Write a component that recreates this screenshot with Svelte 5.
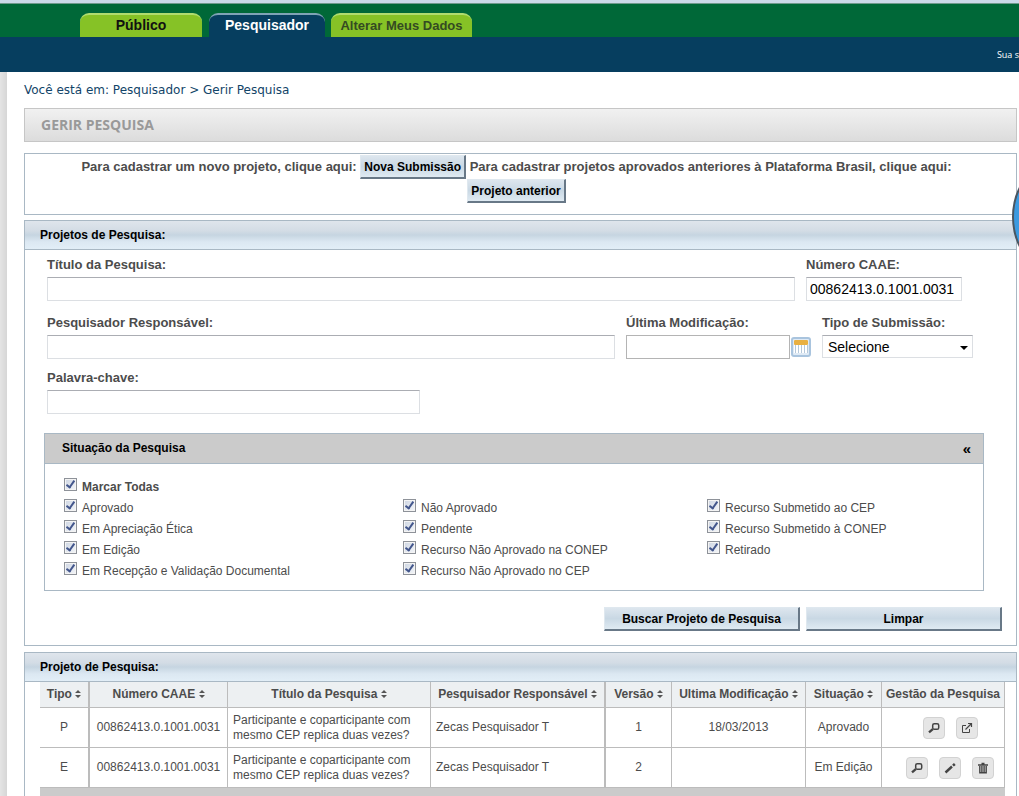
<script>
  const tabs = [
    { label: 'Público', kind: 'public' },
    { label: 'Pesquisador', kind: 'active' },
    { label: 'Alterar Meus Dados', kind: 'account' }
  ];

  let statuses = $state([
    { label: 'Aprovado', checked: true },
    { label: 'Não Aprovado', checked: true },
    { label: 'Recurso Submetido ao CEP', checked: true },
    { label: 'Em Apreciação Ética', checked: true },
    { label: 'Pendente', checked: true },
    { label: 'Recurso Submetido à CONEP', checked: true },
    { label: 'Em Edição', checked: true },
    { label: 'Recurso Não Aprovado na CONEP', checked: true },
    { label: 'Retirado', checked: true },
    { label: 'Em Recepção e Validação Documental', checked: true },
    { label: 'Recurso Não Aprovado no CEP', checked: true }
  ]);

  let all_checked = $derived(statuses.every((s) => s.checked));

  const toggle_all = (e) => {
    const checked = e.target.checked;
    statuses.forEach((s) => (s.checked = checked));
  };

  let open = $state(true);
  let title = $state('');
  let caae = $state('00862413.0.1001.0031');
  let researcher = $state('');
  let modified = $state('');
  let keyword = $state('');

  const clear = () => {
    title = caae = researcher = modified = keyword = '';
  };

  const columns = [
    { label: 'Tipo', width: 50, sort: true },
    { label: 'Número CAAE', width: 138, sort: true },
    { label: 'Título da Pesquisa', width: 203, sort: true },
    { label: 'Pesquisador Responsável', width: 175, sort: true },
    { label: 'Versão', width: 66, sort: true },
    { label: 'Ultima Modificação', width: 134, sort: true },
    { label: 'Situação', width: 76, sort: true },
    { label: 'Gestão da Pesquisa', width: 123, sort: false }
  ];
  const total = columns.reduce((sum, c) => sum + c.width, 0);

  const projects = [
    {
      type: 'P',
      caae: '00862413.0.1001.0031',
      title: 'Participante e coparticipante com mesmo CEP replica duas vezes?',
      researcher: 'Zecas Pesquisador T',
      version: 1,
      modified: '18/03/2013',
      status: 'Aprovado',
      actions: ['view', 'open']
    },
    {
      type: 'E',
      caae: '00862413.0.1001.0031',
      title: 'Participante e coparticipante com mesmo CEP replica duas vezes?',
      researcher: 'Zecas Pesquisador T',
      version: 2,
      modified: '',
      status: 'Em Edição',
      actions: ['view', 'edit', 'remove']
    }
  ];

  const action_names = {
    view: 'Detalhar',
    open: 'Abrir',
    edit: 'Editar',
    remove: 'Excluir'
  };
</script>

{#snippet icon(name)}
  <svg width="12" height="12" viewBox="0 0 12 12" fill="none" stroke="#444">
    {#if name === 'view'}
      <rect x="4.7" y="1.7" width="6" height="5.6" rx="1.6" stroke-width="1.5" />
      <path d="M4.8 7.2 1 10.4" stroke-width="2.4" />
    {:else if name === 'open'}
      <path d="M5 3.500H1.500v7h7V7" />
      <path d="M4.500 7.500 10 2M7 1.500h3.500V5" stroke-width="1.2" />
    {:else if name === 'edit'}
      <path d="M1.500 10.500 8 4.500" stroke-width="2.4" />
      <path d="M9 3.600 10.800 2" stroke-width="2.6" />
    {:else}
      <path d="M1 3h10M4.500 1.500h3" stroke-width="1.6" />
      <path d="M2.800 4v6.800h6.400V4M4.900 4v7M7.100 4v7" stroke-width="1.4" />
    {/if}
  </svg>
{/snippet}

<div class="page">
  <header>
    <nav>
      {#each tabs as tab}
        <a href="#{tab.kind}" class="tab {tab.kind}">{tab.label}</a>
      {/each}
    </nav>
    <div class="session">Sua s</div>
  </header>

  <main>
    <p class="breadcrumb">Você está em: Pesquisador &gt; Gerir Pesquisa</p>
    <h1>GERIR PESQUISA</h1>

    <div class="intro">
      Para cadastrar um novo projeto, clique aqui:
      <button class="button">Nova Submissão</button>
      Para cadastrar projetos aprovados anteriores à Plataforma Brasil, clique aqui:
      <button class="button">Projeto anterior</button>
    </div>

    <section class="panel">
      <h2>Projetos de Pesquisa:</h2>
      <form onsubmit={(e) => e.preventDefault()}>
        <div class="fields">
          <div class="row first">
            <div class="field grow">
              <label for="title">Título da Pesquisa:</label>
              <input id="title" type="text" bind:value={title} />
            </div>
            <div class="field caae">
              <label for="caae">Número CAAE:</label>
              <input id="caae" type="text" bind:value={caae} />
            </div>
          </div>

          <div class="row">
            <div class="field grow">
              <label for="researcher">Pesquisador Responsável:</label>
              <input id="researcher" type="text" bind:value={researcher} />
            </div>
            <div class="field date">
              <label for="modified">Última Modificação:</label>
              <div class="picker">
                <input id="modified" type="text" bind:value={modified} />
                <button type="button" class="calendar" aria-label="Calendário">
                  <svg width="20" height="20" viewBox="0 0 20 20">
                    <rect x="1" y="1" width="18" height="18" rx="2" fill="#dfeaf5" stroke="#a9c4de" stroke-width="2" />
                    <rect x="3" y="3" width="14" height="13" fill="#fff" />
                    <rect x="3" y="3" width="14" height="5" rx="1" fill="#e9b042" />
                    <path d="M4.5 8v8M7.5 8v8M10.5 8v8M13.5 8v8M16.5 8v8" stroke="#b5c8da" />
                  </svg>
                </button>
              </div>
            </div>
            <div class="field kind">
              <label for="kind">Tipo de Submissão:</label>
              <div class="select">
                <select id="kind">
                  <option>Selecione</option>
                </select>
                <svg width="8" height="4" viewBox="0 0 8 4"><path d="M0 0h8L4 4z" /></svg>
              </div>
            </div>
          </div>

          <div class="field keyword">
            <label for="keyword">Palavra-chave:</label>
            <input id="keyword" type="text" bind:value={keyword} />
          </div>
        </div>

        <div class="status">
          <h3>
            Situação da Pesquisa
            <button type="button" aria-label="Recolher" onclick={() => (open = !open)}>«</button>
          </h3>
          {#if open}
            <div class="checks">
              <label class="all">
                <input type="checkbox" checked={all_checked} onchange={toggle_all} />
                Marcar Todas
              </label>
              {#each statuses as status}
                <label>
                  <input type="checkbox" bind:checked={status.checked} />
                  {status.label}
                </label>
              {/each}
            </div>
          {/if}
        </div>

        <div class="submit">
          <button class="button wide">Buscar Projeto de Pesquisa</button>
          <button type="button" class="button wide" onclick={clear}>Limpar</button>
        </div>
      </form>
    </section>

    <section class="panel results">
      <h2>Projeto de Pesquisa:</h2>
      <div class="list">
        <table>
          <colgroup>
            {#each columns as column}
              <col style="width: {(column.width / total) * 100}%" />
            {/each}
          </colgroup>
          <thead>
            <tr>
              {#each columns as column}
                <th>
                  {column.label}
                  {#if column.sort}
                    <svg width="6" height="8" viewBox="0 0 6 8" fill="#555"><path d="M3 0 6 3H0zM0 5h6L3 8z" /></svg>
                  {/if}
                </th>
              {/each}
            </tr>
          </thead>
          <tbody>
            {#each projects as project}
              <tr>
                <td>{project.type}</td>
                <td>{project.caae}</td>
                <td class="left">{project.title}</td>
                <td class="left">{project.researcher}</td>
                <td>{project.version}</td>
                <td>{project.modified}</td>
                <td>{project.status}</td>
                <td>
                  <div class="actions">
                    {#each project.actions as action}
                      <button aria-label={action_names[action]}>{@render icon(action)}</button>
                    {/each}
                  </div>
                </td>
              </tr>
            {/each}
          </tbody>
        </table>
        <div class="pager"></div>
      </div>
    </section>
  </main>

  <div class="help"></div>
</div>

<style>
  :global(body) {
    margin: 0;
  }

  .page {
    position: relative;
    display: flex;
    flex-direction: column;
    min-height: 100vh;
    overflow: hidden;
    box-sizing: border-box;
    font-family: 'Liberation Sans', Arial, sans-serif;
    font-size: 12px;
    color: #4c4c4c;
    background: #fff;
  }

  .page * {
    box-sizing: border-box;
  }

  header {
    border-top: 3px solid #cbdae9;
    background: #006838;
  }

  nav {
    display: flex;
    align-items: flex-end;
    height: 34px;
    padding-left: 80px;
    border-top: 1px solid #6f9a8c;
  }

  .tab {
    height: 24px;
    border-top: 2px solid #b0dc6e;
    border-radius: 9px 9px 0 0;
    background: #86c226;
    color: #111;
    font-size: 14px;
    font-weight: bold;
    line-height: 21px;
    text-align: center;
    text-decoration: none;
  }

  .tab.public {
    width: 122px;
    margin-right: 7px;
  }

  .tab.active {
    width: 116px;
    margin-right: 6px;
    border-top-color: #7fa3b5;
    background: #063e5f;
    color: #fff;
  }

  .tab.account {
    width: 141px;
    color: #344a22;
    font-size: 13px;
  }

  .session {
    height: 35px;
    overflow: hidden;
    background: #063e5f;
    color: #fff;
    font-family: 'Open Sans', sans-serif;
    font-size: 9px;
    line-height: 35px;
    text-align: right;
    white-space: nowrap;
  }

  main {
    flex: 1;
    display: flex;
    flex-direction: column;
    padding: 10px 2px 0 24px;
    background: linear-gradient(to right, #e4e4e4, #d6d6d6 7px, #fff 7px);
  }

  .breadcrumb {
    margin: 0 0 10px;
    color: #124468;
    font-family: 'DejaVu Sans', Verdana, sans-serif;
    font-size: 12px;
    line-height: 16px;
  }

  h1 {
    margin: 0;
    padding-left: 16px;
    border: 1px solid #c6c6c6;
    background: linear-gradient(#f1f1f1, #dcdcdc);
    color: #999;
    font-family: 'Open Sans', sans-serif;
    font-size: 14px;
    font-weight: bold;
    line-height: 32px;
  }

  .intro {
    margin-top: 11px;
    padding: 1px 28px 11px 20px;
    border: 1px solid #a9b8c4;
    font-size: 13px;
    font-weight: bold;
    line-height: 24px;
    text-align: center;
  }

  .button {
    height: 24px;
    padding: 0 3px;
    border: solid;
    border-width: 1px 2px 2px 1px;
    border-color: #dfe8ef #687887 #687887 #dfe8ef;
    background: linear-gradient(#dde6ee, #c9d8e4 50%, #dfeaf2);
    color: #000;
    font: bold 12px 'Liberation Sans', Arial, sans-serif;
    vertical-align: top;
  }

  .button.wide {
    width: 196px;
  }

  .panel {
    margin-top: 5px;
    border: 1px solid #a9b8c4;
  }

  h2 {
    margin: 0;
    padding-left: 15px;
    border-bottom: 1px solid #a9b8c4;
    background: linear-gradient(#dfe5ec, #d3dce5 35%, #c6d5e1 50%, #dce8f2 75%, #e2eef7);
    color: #000;
    font-size: 12px;
    line-height: 28px;
  }

  form {
    padding: 7px 14px 14px 19px;
  }

  .fields {
    padding: 0 29px 0 3px;
  }

  .row {
    display: flex;
    gap: 11px;
    margin-bottom: 11px;
  }

  .row.first {
    margin-bottom: 14px;
    padding-right: 11px;
  }

  .field {
    display: flex;
    flex-direction: column;
    gap: 4px;
    font-size: 13px;
    font-weight: bold;
    line-height: 16px;
  }

  .grow {
    flex: 1;
  }

  .caae {
    width: 156px;
  }

  .date {
    width: 185px;
  }

  .kind {
    width: 151px;
  }

  .keyword {
    width: 373px;
  }

  input[type='text'] {
    width: 100%;
    height: 24px;
    padding: 0 3px;
    border: 1px solid #dcdfe3;
    border-top-color: #abadb3;
    background: #fff;
    color: #000;
    font: 14px 'Liberation Sans', Arial, sans-serif;
  }

  .picker {
    display: flex;
    align-items: center;
    gap: 1px;
  }

  .picker input[type='text'] {
    flex: 1;
    border-color: #b4b4b4;
  }

  .calendar {
    width: 20px;
    height: 20px;
    padding: 0;
    border: 0;
    background: none;
  }

  .calendar svg {
    display: block;
  }

  .select {
    position: relative;
  }

  .select svg {
    position: absolute;
    right: 5px;
    top: 11px;
    pointer-events: none;
  }

  select {
    width: 100%;
    height: 23px;
    padding: 0 5px;
    appearance: none;
    border: 1px solid #dcdfe3;
    border-top-color: #abadb3;
    border-radius: 0;
    background: #fff;
    color: #000;
    font: 14px 'Liberation Sans', Arial, sans-serif;
  }

  .status {
    margin: 19px 18px 16px 0;
    border: 1px solid #a9b8c4;
  }

  h3 {
    display: flex;
    justify-content: space-between;
    margin: 0;
    padding: 0 12px 0 17px;
    border-bottom: 1px solid #a9b8c4;
    background: #cbcbcb;
    color: #000;
    font-size: 12px;
    line-height: 29px;
  }

  h3 button {
    padding: 0;
    border: 0;
    background: none;
    font: bold 15px 'Liberation Sans', Arial, sans-serif;
  }

  .checks {
    display: grid;
    grid-template-columns: 339fr 304fr 276fr;
    padding: 14px 0 7px 19px;
  }

  .checks label {
    display: flex;
    gap: 5px;
    height: 21px;
    line-height: 19px;
  }

  .checks .all {
    grid-column: 1 / -1;
    font-weight: bold;
  }

  input[type='checkbox'] {
    display: grid;
    place-items: start center;
    width: 13px;
    height: 13px;
    margin: 0;
    appearance: none;
    border: 1px solid #8e9299;
    background: linear-gradient(135deg, #cdd5e2, #f4f6f9);
    box-shadow: inset 0 0 0 1px #f4f4f4;
  }

  input[type='checkbox']:checked::after {
    content: '';
    box-sizing: border-box;
    width: 5px;
    height: 9px;
    border: solid #43568c;
    border-width: 0 2px 2px 0;
    transform: rotate(35deg);
  }

  .submit {
    display: flex;
    justify-content: flex-end;
    gap: 6px;
  }

  .results {
    flex: 1;
    display: flex;
    flex-direction: column;
    margin-top: 6px;
    border-bottom: 0;
  }

  .list {
    flex: 1;
    display: flex;
    flex-direction: column;
    margin: 0 11px 0 15px;
  }

  table {
    width: 100%;
    table-layout: fixed;
    border-collapse: separate;
    border-spacing: 0;
  }

  th,
  td {
    padding: 0;
    border-right: 1px solid #bcbcbc;
    border-bottom: 1px solid #bcbcbc;
    text-align: center;
  }

  th:nth-child(1),
  td:nth-child(1),
  th:nth-child(4),
  td:nth-child(4) {
    border-right-width: 2px;
  }

  th {
    height: 26px;
    background: #edf0f2;
    font-size: 12px;
    line-height: 24px;
    vertical-align: top;
    white-space: nowrap;
  }

  td {
    height: 40px;
    line-height: 15px;
  }

  td.left {
    padding: 0 5px;
    text-align: left;
  }

  .actions {
    display: flex;
    justify-content: center;
    gap: 11px;
    padding-left: 14px;
  }

  .actions button {
    display: grid;
    place-items: center;
    width: 22px;
    height: 22px;
    padding: 0;
    border: 1px solid #d2d2d2;
    border-radius: 4px;
    background: #e6e6e6;
  }

  .pager {
    flex: 1;
    min-height: 9px;
    background: #cbcbcb;
  }

  .help {
    position: absolute;
    top: 151px;
    right: -125px;
    width: 132px;
    height: 132px;
    border: 2px solid #4a5661;
    border-radius: 50%;
    background: #3c9ae0;
  }
</style>
